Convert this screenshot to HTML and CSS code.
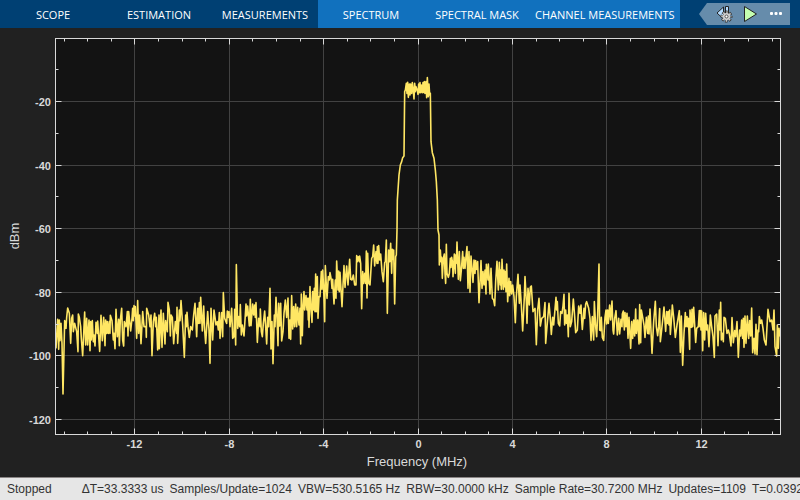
FILE: index.html
```
<!DOCTYPE html>
<html lang="en">

<head>
    <meta charset="UTF-8">
    <meta name="viewport" content="width=device-width,initial-scale=1">
    <link rel="stylesheet" href="styles.css">
    <title>Spectrum Analyzer</title>
</head>

<body>
    <header class="toolstrip">
        <nav class="tabs">
            <button class="tab">SCOPE</button>
            <button class="tab">ESTIMATION</button>
            <button class="tab">MEASUREMENTS</button>
            <button class="tab tab-context">SPECTRUM</button>
            <button class="tab tab-context">SPECTRAL MASK</button>
            <button class="tab tab-context">CHANNEL MEASUREMENTS</button>
        </nav>
        <div class="quick-access">
            <button class="quick-button" aria-label="Step back options">
                <svg width="18" height="18" viewBox="0 0 18 18">
                    <path d="M8.500 2v12L2 8z" fill="#b5dcff" stroke="#222" stroke-linejoin="round"/>
                    <path d="M10.500 1.500h3v8h-3z" fill="#b5dcff" stroke="#222"/>
                    <g transform="translate(11.500 11.500)" fill="none">
                        <circle r="4" stroke="#333" stroke-width="4" stroke-dasharray="2.200 .942" stroke-dashoffset="1.100"/>
                        <circle r="4" stroke="#d2d2d2" stroke-width="2.400" stroke-dasharray="1.300 1.842" stroke-dashoffset=".65"/>
                        <circle r="3.600" fill="#d2d2d2"/>
                        <circle r="1.500" fill="#fff" stroke="#555"/>
                    </g>
                </svg>
            </button>
            <button class="quick-button" aria-label="Run">
                <svg width="18" height="18" viewBox="0 0 18 18">
                    <path d="M3.500 1.500v15L15.500 9z" fill="#c4ffb0" stroke="#222" stroke-linejoin="round"/>
                </svg>
            </button>
            <button class="quick-button" aria-label="More">
                <svg width="18" height="18" viewBox="0 0 18 18">
                    <g fill="#fff">
                        <rect x="3" y="7" width="3" height="3" rx="1"/>
                        <rect x="7.500" y="7" width="3" height="3" rx="1"/>
                        <rect x="12" y="7" width="3" height="3" rx="1"/>
                    </g>
                </svg>
            </button>
        </div>
    </header>
    <main class="scope">
        <svg class="plot" viewBox="0 28 800 449" role="img" aria-label="Power spectrum">
            <rect class="axes" x="55.500" y="38.500" width="725" height="396"/>
            <g id="grid" class="grid"></g>
            <polyline id="trace" class="trace"/>
            <g id="ticks" class="ticks"></g>
            <rect class="frame" x="55.500" y="38.500" width="725" height="396"/>
            <g id="labels" class="tick-labels"></g>
            <text class="axis-label" x="417" y="466">Frequency (MHz)</text>
            <text class="axis-label" transform="translate(19 236) rotate(-90)">dBm</text>
        </svg>
    </main>
    <footer class="status">
        <span class="status-state">Stopped</span>
        <span>ΔT=33.3333 us</span>
        <span>Samples/Update=1024</span>
        <span>VBW=530.5165 Hz</span>
        <span>RBW=30.0000 kHz</span>
        <span>Sample Rate=30.7200 MHz</span>
        <span>Updates=1109</span>
        <span>T=0.0392</span>
    </footer>
    <script src="script.js"></script>
</body>

</html>
```

FILE: styles.css
```
*,
*::before,
*::after {
    box-sizing: border-box;
    padding: 0;
    margin: 0;
}

body {
    display: flex;
    flex-direction: column;
    height: 100vh;
    overflow: hidden;
    background: #212121;
    font-family: "Liberation Sans", Arial, sans-serif;
}

button {
    border: none;
    background: none;
    color: inherit;
    font: inherit;
}

.toolstrip {
    display: flex;
    justify-content: space-between;
    align-items: center;
    height: 28px;
    padding-right: 10px;
    background: #004073;
    color: #fff;
    font: 11px "Open Sans", "Noto Sans", sans-serif;
}

.tabs {
    display: flex;
    height: 100%;
}

.tab {
    min-width: 106px;
    padding: 0 5px;
    white-space: nowrap;
}

.tab-context {
    background: #1171be;
}

.quick-access {
    display: flex;
    align-items: center;
    gap: 8px;
    height: 22px;
    padding: 0 5px 0 16px;
    background: #668cab;
    clip-path: polygon(8px 0, 100% 0, 100% 100%, 8px 100%, 0 50%);
}

.quick-button {
    display: flex;
}

.scope {
    flex: 1;
    min-height: 0;
}

.plot {
    display: block;
    width: 100%;
    height: 100%;
}

.axes {
    fill: #131313;
}

.frame {
    fill: none;
    stroke: #d9d9d9;
}

.grid {
    stroke: #424242;
}

.ticks {
    stroke: #d9d9d9;
}

.trace {
    fill: none;
    stroke: #ffe764;
    stroke-width: 1.6;
    stroke-linejoin: round;
}

.tick-labels {
    fill: #d9d9d9;
    font-size: 11px;
    font-weight: bold;
}

.x-label,
.axis-label {
    text-anchor: middle;
}

.y-label {
    text-anchor: end;
}

.axis-label {
    fill: #d9d9d9;
    font-size: 13px;
}

.status {
    display: flex;
    align-items: center;
    gap: 6px;
    height: 23px;
    padding-left: 7px;
    border-top: 1px solid #8a8585;
    background: #e6e6e6;
    color: #333;
    font-size: 12px;
    white-space: nowrap;
}

.status-state {
    margin-right: 24px;
}
```

FILE: script.js
```
'use strict';

const axes = { left: 55.5, right: 780.5, top: 38.5, bottom: 434.5 };

const freqToX = mhz => Math.floor(418 + mhz * 23.6) + 0.5;
const powerToY = dbm => Math.floor(37.9 - dbm * 3.18) + 0.5;

// Sweep data in blocks: origin of the block, then x,y pairs in thirds of a unit
const sweep = [
    { x: 50, y: 230, points: '18,355 21,300 23,268 26,358 28,270 30,332 33,280 36,340 39,492 44,272 48,295 50,262 53,234 58,250 62,340 65,265 68,255 70,305 74,280 80,305 84,365 85,252 88,262 92,290 94,325 98,377 102,290 104,246 107,345 110,265 113,345 117,270 120,362 122,275 124,330 127,272 130,335 132,315 135,348 138,277 142,310 143,273 149,364 153,256 157,332 161,262 165,347 167,270 170,310 172,275 175,310 178,275 180,310 181,256 186,272 190,330 192,310 195,356 198,238 202,320 206,268 208,347 211,270 215,235 218,330 221,348 223,275 228,290 232,245 234,318 236,245 242,303 246,265 248,235 250,272 252,227 254,258 256,230 260,325 263,212 266,310 269,255 273,341 278,245 282,290 288,290 289,322 290,235 296,255 300,290 303,255 306,377 310,275 314,250 317,290 319,262 323,360 327,255 328,356 333,240 336,352 340,250 345,342 347,272 352,305 354,217 358,240 361,318 363,255 367,262 371,341 376,275 380,310 381,232 383,340 388,240 390,272 393,212 398,285 403,382 407,255 409,290 411,247 414,290 418,322 422,290 427,300 431,255 435,220 440,320 443,235 446,280 448,218 450,280 452,202 457,303 461,228 464,300 467,340 473,245 477,300 480,400 483,235 488,330 492,240 495,262 498,285 502,275 505,300 508,248 510,325 515,248 518,320 520,188 524,265 530,280 532,243 535,262 537,245 540,290 545,235 548,325 552,320 554,238 557,345 559,104 563,295 566,260 569,290' },
    { x: 230, y: 230, points: '31,224 34,315 37,285 42,318 48,222 50,258 53,228 58,288 61,208 63,287 68,222 71,255 74,225 76,262 78,218 82,337 86,265 90,290 91,237 94,305 97,320 100,280 104,243 107,290 110,342 113,262 116,290 120,175 123,357 126,275 129,401 133,255 135,290 138,202 141,260 144,347 146,220 149,288 152,220 155,333 159,305 162,250 166,210 170,262 174,204 177,325 180,270 182,328 185,197 188,297 191,230 194,290 197,222 200,290 203,232 207,285 210,235 212,342 214,192 217,317 219,235 222,185 224,240 228,197 231,240 233,205 235,270 236,205 237,292 240,170 243,235 246,277 248,185 251,240 253,175 255,245 257,132 259,245 262,140 264,265 267,200 270,200 274,125 276,178 278,120 281,175 284,275 286,107 291,205 295,140 298,150 300,128 304,150 306,175 308,148 312,222 316,150 318,205 320,93 324,180 326,123 328,185 330,127 336,230 339,165 342,107 345,172 350,108 354,165 359,88 362,148 366,150 370,135 374,165 378,165 380,77 382,95 385,80 388,95 389,78 392,100 395,236 398,125 401,160 404,130 407,160 409,63 411,204 413,70 416,160 420,165 425,85 428,80 431,45 434,108 438,65 441,100 442,50 444,100 446,47 449,90 452,72 456,125 460,155 464,98 466,95 469,30 472,250 476,60 479,95 482,40 485,130 487,58 490,88 491,60 494,222 497,80 499,75 501,0' },
    // Occupied channel
    { x: 380, y: 60, points: '52,420 54,390 57,345 61,315 65,305 68,293 72,288 74,95 76,90 79,70 81,100 83,67 85,112 88,72 90,105 92,72 95,100 97,68 100,95 102,117 104,70 106,95 108,80 112,92 114,103 116,72 118,98 120,68 122,98 124,75 127,98 129,68 131,97 133,65 135,100 138,65 140,113 142,53 145,110 147,72 149,105 151,100 153,245 157,278 162,295 166,330 169,365 172,420' },
    { x: 410, y: 230, points: '84,0 87,15 88,105 91,60 93,95 95,82 97,145 100,85 103,72 105,130 107,160 109,43 111,130 115,142 118,130 121,85 123,112 125,82 128,100 129,140 133,72 136,130 137,75 139,100 141,36 145,148 148,65 151,152 154,120 158,65 160,115 162,82 165,115 168,80 171,50 174,175 177,65 180,187 183,78 186,115 189,157 192,90 195,130 197,92 200,118 203,95 207,218 210,160 213,92 216,175 219,125 222,165 225,120 228,192 229,103 234,150 235,102 238,155 240,192 243,115 247,205 251,210 254,227 257,155 261,94 265,180 268,97 271,165 272,120 274,178 276,88 280,178 282,120 284,170 286,125 288,185 290,102 293,215 297,145 299,197 302,155 305,192 308,165 312,200 316,278 319,200 324,133 328,220 330,165 334,225 338,303 343,200 345,140 349,215 351,280 354,175 358,225 361,172 364,168 369,245 375,235 379,344 383,240 387,205 391,288 395,265 401,260 405,218 407,340 411,290 417,220 421,265 424,313 428,262 431,285 438,202 440,240 442,215 445,280 449,288 452,245 456,250 459,228 462,193 464,285 467,240 469,280 472,255 475,320 477,190 481,290 485,275 490,207 494,260 497,308 502,300 506,228 510,250 513,225 515,270 517,298 522,235 524,265 527,222 530,215 536,235 540,265 543,331 547,260 551,330 553,215 557,290 560,320 563,255 567,102 569,300' },
    { x: 590, y: 230, points: '32,302 34,262 37,322 41,331 45,262 48,240 50,282 53,240 55,280 59,225 62,270 66,213 69,300 71,312 74,265 78,242 82,315 86,265 89,312 93,268 96,290 97,252 100,243 103,300 105,248 108,290 111,250 114,325 117,262 122,355 125,275 128,325 131,270 134,318 137,237 139,310 143,270 147,342 149,224 152,338 154,240 158,262 162,285 165,322 169,262 173,310 175,258 177,312 180,237 186,370 191,275 196,214 199,290 203,317 206,290 209,236 211,335 215,300 222,231 227,304 230,245 232,280 235,245 237,285 239,240 241,313 245,260 247,225 251,262 256,322 261,285 268,242 271,367 274,258 278,406 282,310 286,248 288,290 291,260 293,290 295,265 299,358 300,240 304,292 306,238 308,290 311,232 317,337 320,295 325,290 328,242 330,290 332,242 333,300 335,243 338,362 341,248 344,330 347,250 350,300 353,285 357,350 361,255 365,290 369,320 373,382 375,258 380,252 384,347 388,240 390,300 392,217 394,330 397,310 400,335 402,262 406,265 411,310 415,300 418,312 423,348 426,263 430,338 434,302 437,320 441,275 445,382 449,300 452,318 455,270 458,325 460,265 462,352 465,258 468,340 472,258 476,325 479,272 482,318 485,234 488,368 492,325 495,372 498,283 501,374 504,300 506,305 508,260 512,280 515,270 519,295 523,330 528,345 531,290 534,238 540,275 545,270 549,300 552,240 555,350 560,378 562,285 565,355 567,295 569,320' },
];

function addShape(parentId, name, attributes, text) {
    let node = document.createElementNS('http://www.w3.org/2000/svg', name);
    for (let key in attributes) {
        node.setAttribute(key, attributes[key]);
    }
    if (text !== undefined) {
        node.textContent = text;
    }
    document.getElementById(parentId).appendChild(node);
}

function addLine(parentId, x1, y1, x2, y2) {
    addShape(parentId, 'line', { x1, y1, x2, y2 });
}

for (let mhz = -15; mhz <= 15; mhz++) {
    let x = freqToX(mhz);
    let major = mhz % 4 === 0;
    let size = major ? 6 : 3;
    addLine('ticks', x, axes.top, x, axes.top + size);
    addLine('ticks', x, axes.bottom, x, axes.bottom - size);
    if (major) {
        addLine('grid', x, axes.top, x, axes.bottom);
        addShape('labels', 'text', { x, y: 448, class: 'x-label' }, mhz);
    }
}

for (let dbm = -120; dbm <= -10; dbm += 10) {
    let y = powerToY(dbm);
    let major = dbm % 20 === 0;
    let size = major ? 6 : 3;
    addLine('ticks', axes.left, y, axes.left + size, y);
    addLine('ticks', axes.right, y, axes.right - size, y);
    if (major) {
        addLine('grid', axes.left, y, axes.right, y);
        addShape('labels', 'text', { x: 51, y: y + 4, class: 'y-label' }, dbm);
    }
}

document.getElementById('trace').setAttribute('points', sweep.map(block =>
    block.points.split(' ').map(point => {
        let [x, y] = point.split(',');
        return (block.x + x / 3) + ',' + (block.y + y / 3);
    }).join(' ')
).join(' '));
```
